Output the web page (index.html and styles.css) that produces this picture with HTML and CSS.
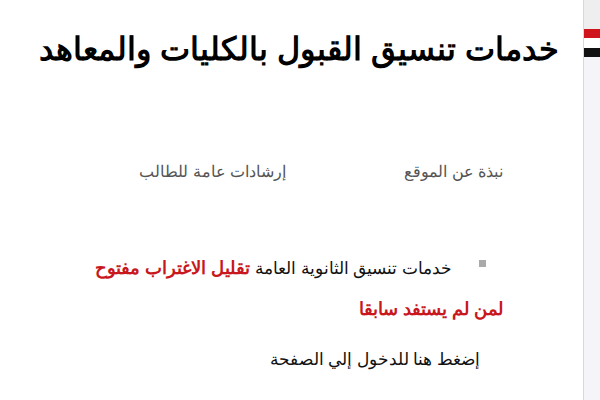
FILE: index.html
```
<!DOCTYPE html>
<html lang="ar" dir="rtl">
<head><meta charset="utf-8"><link rel="stylesheet" href="styles.css"></head>
<body>
<div class="page">
  <aside class="side">
    <div class="flag"><span class="red"></span><span class="white"></span><span class="black"></span></div>
  </aside>
  <main class="content">
    <h1 class="title">خدمات تنسيق القبول بالكليات والمعاهد</h1>
    <nav class="nav">
      <a class="nav-link">نبذة عن الموقع</a>
      <a class="nav-link">إرشادات عامة للطالب</a>
    </nav>
    <div class="news">
      <p class="item"><span class="bullet"></span><span class="plain">خدمات تنسيق الثانوية العامة</span> <strong class="hot">تقليل الاغتراب مفتوح</strong> <strong class="hot">لمن لم يستفد سابقا</strong></p>
      <p class="enter">إضغط هنا للدخول إلي الصفحة</p>
    </div>
  </main>
</div>
</body>
</html>
```
FILE: styles.css
```
html,body{margin:0;padding:0;background:#fff}
body{font-family:sans-serif;color:#111}
.page{display:flex;flex-direction:row;height:400px;overflow:hidden}
.content{flex:1;padding-right:24px}
.title{margin:21px 0 0;font-size:32px;font-weight:bold;line-height:56px;color:#000;white-space:nowrap}
.nav{display:flex;gap:118px;margin-top:83px;padding-right:56px;font-size:16px;line-height:24px}
.nav-link{color:#555}
.news{margin-top:64px;padding-right:56px;width:415px}
.item{margin:0;font-size:17px;line-height:41px;color:#111}
.plain{color:#111}
.bullet{display:inline-block;width:7px;height:7px;background:#aaa;margin-right:17px;margin-left:27px;vertical-align:7px}
.hot{color:#c8171d;font-weight:bold;font-size:18px}
.enter{margin:14px 23px 0 0;font-size:16.5px;line-height:30px;color:#111}
.side{width:16px;flex:none;border-left:1px solid #d8d8dc;background:#f5f5f9}
.flag{display:flex;flex-direction:column;padding-top:29px;background:linear-gradient(#eeeeee,#eeeeee) top/100% 29px no-repeat}
.red{height:9px;background:#d0141b}
.white{height:10px;background:#fff}
.black{height:9px;background:#111}
```
